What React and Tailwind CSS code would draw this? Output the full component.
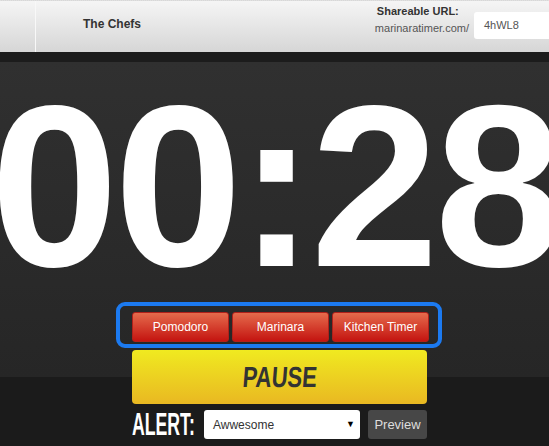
export default function App() {
  return (
    <div className="w-[549px] h-[446px] overflow-hidden font-['Liberation_Sans',Arial,sans-serif] bg-[linear-gradient(to_bottom,#1c1c1c_0px,#1c1c1c_62px,#303030_62px,#262626_377px,#1b1b1b_377px)]">
      {/* top bar */}
      <div className="h-[52px] flex items-stretch bg-[linear-gradient(to_bottom,#f5f5f5,#d6d6d6)] border-t border-dotted border-[#e0e0e0]">
        <div className="w-[36px] border-r border-[#f8f8f8]" />
        <div className="pl-[47px] pb-[6px] flex items-center text-[12px] font-bold text-[#333]">The Chefs</div>
        <div className="ml-auto flex items-start">
          <div className="flex flex-col items-start mt-[4px]">
            <div className="pl-[2px] text-[11px] font-bold text-[#333] leading-[13px]">Shareable URL:</div>
            <div className="mt-[4px] text-[11px] text-[#555] leading-[13px]">marinaratimer.com/</div>
          </div>
          <div className="ml-[5px] mt-[11px] w-[75px] h-[27px] bg-white rounded-l-[3px] flex items-center pl-[10px] text-[11px] text-[#555]">4hWL8</div>
        </div>
      </div>

      {/* timer */}
      <div className="mt-[20px] h-[230px] text-[230px] leading-none font-bold text-white text-center whitespace-nowrap tracking-[-4px] flex justify-center">
        <span>00:28</span>
      </div>

      {/* mode buttons */}
      <div className="ml-[116px] w-[326px] h-[46px] border-4 border-[#1c7af0] rounded-[9px] pl-[12px] pt-[6px] flex gap-[3px]">
        {["Pomodoro", "Marinara", "Kitchen Timer"].map((t) => (
          <button
            key={t}
            className="w-[97px] h-[30px] rounded-[3px] border border-[#b0201a] bg-[linear-gradient(to_bottom,#e56b4c,#c41410)] text-white text-[12px]"
          >
            {t}
          </button>
        ))}
      </div>

      <button className="mt-[2px] ml-[132px] w-[295px] h-[54px] rounded-[4px] bg-[linear-gradient(to_bottom,#f0ea20,#e9b822)] flex items-center justify-center">
        <span className="inline-block text-[29px] font-bold text-[#333] leading-none scale-x-[0.76] -skew-x-6">PAUSE</span>
      </button>

      <div className="mt-[6px] ml-[132px] flex items-center">
        <div className="w-[72px] h-[29px] overflow-visible">
          <span className="inline-block origin-left scale-x-[0.57] text-[31px] font-bold text-white leading-[29px] whitespace-nowrap">ALERT:</span>
        </div>
        <div className="w-[156px] h-[29px] bg-white rounded-[3px] flex items-center justify-between pl-[9px] pr-[5px] text-[12px] text-[#333]">
          <span>Awwesome</span>
          <span className="text-[9px] text-black">▼</span>
        </div>
        <button className="ml-[8px] w-[59px] h-[29px] rounded-[3px] bg-[#474747] text-[13px] text-[#ddd]">Preview</button>
      </div>
    </div>
  );
}
